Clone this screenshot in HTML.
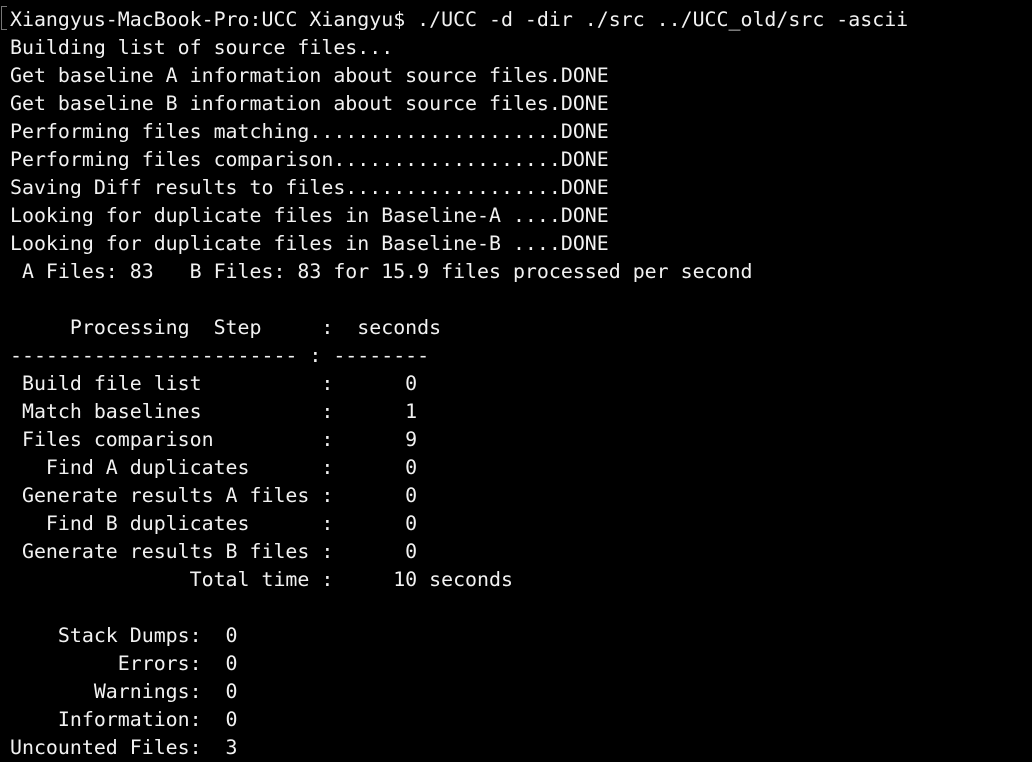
<html><head><style>
body{margin:0;background:#000;width:1032px;height:758px;overflow:hidden}
pre{margin:0;position:absolute;left:10px;top:6px;font-family:"DejaVu Sans Mono","Liberation Mono",monospace;font-size:19.9px;line-height:28px;color:#f2f2f2;letter-spacing:0}
.b{position:absolute;left:1px;top:6px;width:5px;height:22px;border:1px solid #777;border-right:none}
</style></head><body><div class="b"></div><pre>Xiangyus-MacBook-Pro:UCC Xiangyu$ ./UCC -d -dir ./src ../UCC_old/src -ascii
Building list of source files...
Get baseline A information about source files.DONE
Get baseline B information about source files.DONE
Performing files matching.....................DONE
Performing files comparison...................DONE
Saving Diff results to files..................DONE
Looking for duplicate files in Baseline-A ....DONE
Looking for duplicate files in Baseline-B ....DONE
 A Files: 83   B Files: 83 for 15.9 files processed per second

     Processing  Step     :  seconds
------------------------ : --------
 Build file list          :      0
 Match baselines          :      1
 Files comparison         :      9
   Find A duplicates      :      0
 Generate results A files :      0
   Find B duplicates      :      0
 Generate results B files :      0
               Total time :     10 seconds

    Stack Dumps:  0
         Errors:  0
       Warnings:  0
    Information:  0
Uncounted Files:  3
</pre></body></html>
